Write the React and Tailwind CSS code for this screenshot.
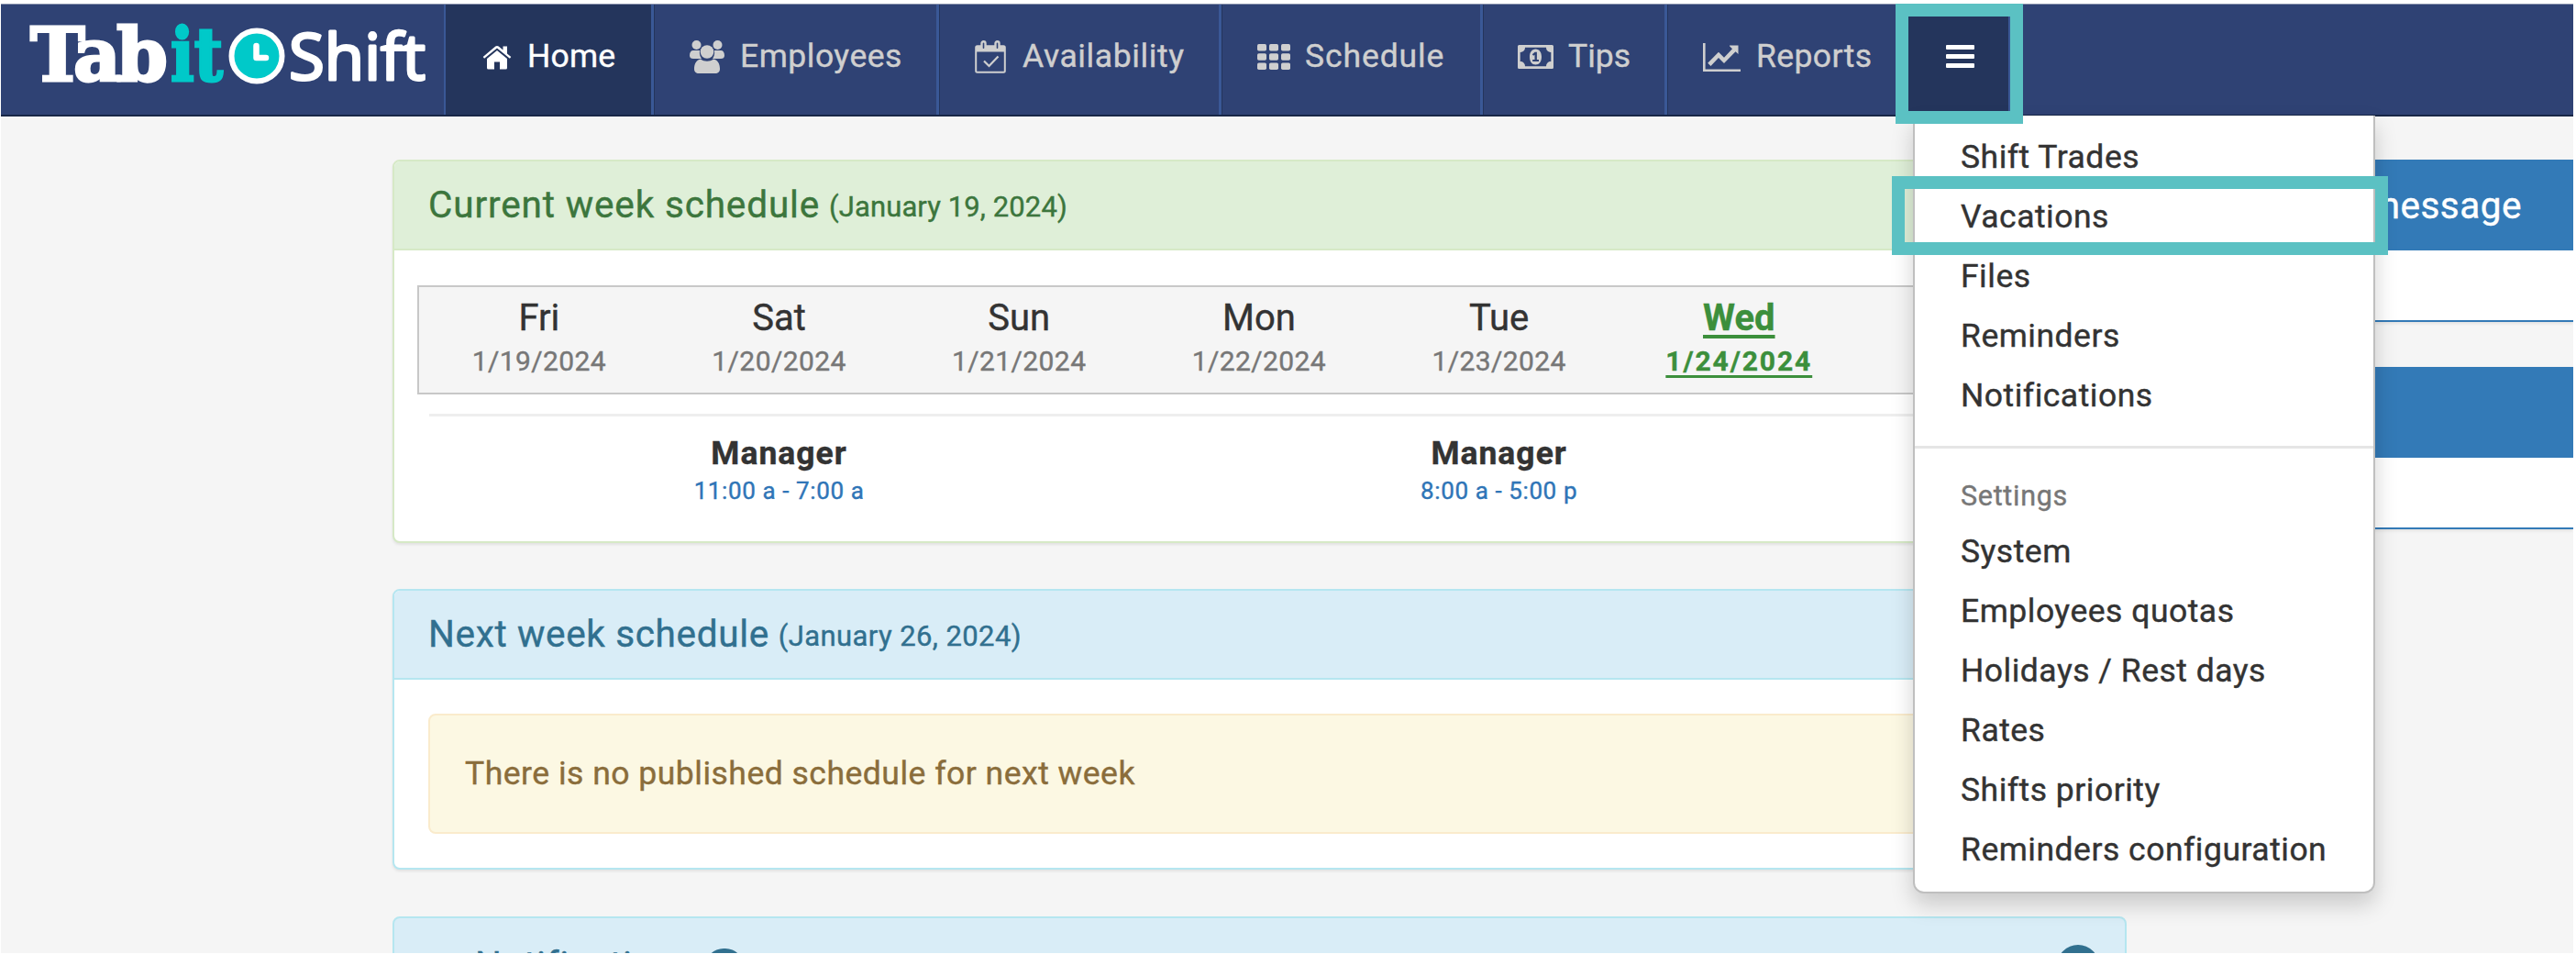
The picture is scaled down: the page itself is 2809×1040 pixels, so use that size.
import React from 'react';

const HomeIcon = () => (
  <svg viewBox="0 0 32 27" className="h-[27px] w-8" fill="currentColor">
    <path d="M16 6 L5 15 V25 a1.500 1.500 0 0 0 1.500 1.500 H13 V18.500 H19 V26.500 H25.500 A1.500 1.500 0 0 0 27 25 V15 Z" />
    <path d="M31.300 13 L27 9.400 V1.500 H22.500 V5.500 L17.700 1.500 C16.700 0.700 15.300 0.700 14.300 1.500 L0.700 13 L2.100 14.800 L16 3.500 L29.900 14.800 Z" />
  </svg>
);

const UsersIcon = () => (
  <svg viewBox="0 0 38 36" className="h-9 w-[38px]" fill="currentColor">
    <circle cx="7.500" cy="5" r="5" />
    <circle cx="30.500" cy="5" r="5" />
    <path d="M4 11 H11 C10.500 15 11.500 18 13 20 H4 C1.500 20 0 19 0 16.500 C0 13 1.500 11 4 11Z" />
    <path d="M34 11 H27 C27.500 15 26.500 18 25 20 H34 C36.500 20 38 19 38 16.500 C38 13 36.500 11 34 11Z" />
    <circle cx="19" cy="12.500" r="7.300" />
    <path d="M12 20.500 C16 23.500 22 23.500 26 20.500 C31 21.500 33 26 33 31 C33 34.500 31 36 28 36 H10 C7 36 5 34.500 5 31 C5 26 7 21.500 12 20.500Z" />
  </svg>
);

const CalendarIcon = () => (
  <svg viewBox="0 0 34 36" className="h-9 w-[34px]" fill="none" stroke="currentColor">
    <rect x="1.200" y="6.200" width="31.600" height="28.600" rx="1.500" strokeWidth="2" />
    <path d="M1 6 H33 V12.500 H1 Z" fill="currentColor" stroke="none" />
    <rect x="7.500" y="1.200" width="4" height="9" rx="2" fill="#2f4274" strokeWidth="2.400" />
    <rect x="22.500" y="1.200" width="4" height="9" rx="2" fill="#2f4274" strokeWidth="2.400" />
    <path d="M10 22.500 L15.500 28 L25.500 17.500" strokeWidth="2.200" />
  </svg>
);

const GridIcon = () => (
  <svg viewBox="0 0 36 28" className="h-7 w-9" fill="currentColor">
    {[0, 13, 26].map((x) =>
      [0, 10.25, 20.5].map((y) => <rect key={`${x}-${y}`} x={x} y={y} width="10" height="7.500" rx="1.700" />)
    )}
  </svg>
);

const MoneyIcon = () => (
  <svg viewBox="0 0 39 26" className="h-[26px] w-[39px]" fill="currentColor" fillRule="evenodd">
    <path d="M1.500 0 H37.500 A1.500 1.500 0 0 1 39 1.500 V24.500 A1.500 1.500 0 0 1 37.500 26 H1.500 A1.500 1.500 0 0 1 0 24.500 V1.500 A1.500 1.500 0 0 1 1.500 0Z M8 2.700 A5 5 0 0 1 2.700 8 V18 A5 5 0 0 1 8 23.300 H31 A5 5 0 0 1 36.300 18 V8 A5 5 0 0 1 31 2.700Z" />
    <path d="M19.500 4.500 C23.500 4.500 26 8 26 13 S23.500 21.500 19.500 21.500 S13 18 13 13 S15.500 4.500 19.500 4.500Z M18.700 7.700 L15.800 10.300 L17.200 11.700 L18.500 10.700 V16 H16.200 V18 H23 V16 H20.900 V7.700Z" />
  </svg>
);

const ChartIcon = () => (
  <svg viewBox="0 0 41 31" className="h-[31px] w-[41px]" fill="currentColor">
    <path d="M0 0 H2.600 V28.400 H41 V31 H0Z" />
    <path d="M38.500 2.500 V12 L35.500 9.300 L23 22 L17 16 L8.500 25 L5.200 21.800 L17 9.700 L23 15.700 L32 6.300 L29 3.300 C28.700 2.900 28.900 2.500 29.500 2.500Z" />
  </svg>
);

const Logo = () => (
  <svg viewBox="0 0 460 105" className="h-[105px] w-[460px] overflow-visible">
    <g fontFamily="DejaVu Serif" fontWeight="700" fontSize="80" strokeWidth="3">
      <text x="13 60 107" y="83" fill="#fff" stroke="#fff">Tab</text>
      <text x="166" y="83" fill="#00c9c9" stroke="#00c9c9" textLength="57" lengthAdjust="spacingAndGlyphs">it</text>
    </g>
    <circle cx="260" cy="56" r="27.500" fill="#00c9c9" stroke="#fff" strokeWidth="6" />
    <path d="M259.500 45 V58 H270" fill="none" stroke="#fff" strokeWidth="6.500" strokeLinecap="round" strokeLinejoin="round" />
    <text x="295" y="82" fill="#fff" stroke="#fff" strokeWidth="3" strokeLinejoin="round" fontFamily="Open Sans" fontSize="69" textLength="149" lengthAdjust="spacingAndGlyphs">Shift</text>
  </svg>
);

const navItems = [
  { label: 'Home', icon: <HomeIcon />, item: 'w-[227px] pl-[39px] gap-[17px] bg-[#24355c] text-white', text: 'tracking-[0.2px]' },
  { label: 'Employees', icon: <UsersIcon />, item: 'w-[311px] pl-[38px] gap-[17px]', text: 'tracking-[0.5px]' },
  { label: 'Availability', icon: <CalendarIcon />, item: 'w-[308px] pl-[38px] gap-[18px]', text: 'tracking-[0.6px]' },
  { label: 'Schedule', icon: <GridIcon />, item: 'w-[285px] pl-[38px] gap-[16px]', text: 'tracking-[0.9px]' },
  { label: 'Tips', icon: <MoneyIcon />, item: 'w-[201px] pl-[37px] gap-[16px]', text: '' },
  { label: 'Reports', icon: <ChartIcon />, item: 'w-[263px] pl-[38px] gap-[17px]', text: 'tracking-[0.4px]' },
];

const days = [
  { name: 'Fri', date: '1/19/2024' },
  { name: 'Sat', date: '1/20/2024', shift: '11:00 a - 7:00 a' },
  { name: 'Sun', date: '1/21/2024' },
  { name: 'Mon', date: '1/22/2024' },
  { name: 'Tue', date: '1/23/2024', shift: '8:00 a - 5:00 p' },
  { name: 'Wed', date: '1/24/2024', today: true },
  { name: 'Thu', date: '1/25/2024' },
];

const mainLinks = ['Shift Trades', 'Vacations', 'Files', 'Reminders', 'Notifications'];
const settingsLinks = ['System', 'Employees quotas', 'Holidays / Rest days', 'Rates', 'Shifts priority', 'Reminders configuration'];

const Navbar = () => (
  <nav className="flex h-[123px] shrink-0 border-t border-b-2 border-t-[#8790ab] border-b-[#182747] bg-[#2f4274] text-[#cfcfcf]">
    <div className="w-[485px] border-r-2 border-[#3a5896] pl-[19px]">
      <Logo />
    </div>
    {navItems.map(({ label, icon, item, text }) => (
      <div key={label} className={`flex items-center border-r-[3px] border-l border-r-[#3a5896] border-l-[#24355c] pb-[6px] ${item}`}>
        <span className="shrink-0">{icon}</span>
        <span className={`text-[35.5px] leading-none ${text}`}>{label}</span>
      </div>
    ))}
    <div className="flex w-[112px] items-center justify-center border-r-[3px] border-[#3a5896] bg-[#24355c] pb-[8px] pl-[4px]">
      <span className="flex flex-col gap-[5px]">
        <span className="h-[5px] w-[31px] rounded-[1px] bg-white" />
        <span className="h-[5px] w-[31px] rounded-[1px] bg-white" />
        <span className="h-[5px] w-[31px] rounded-[1px] bg-white" />
      </span>
    </div>
  </nav>
);

const CurrentWeek = () => (
  <section className="h-[418px] rounded-lg border-2 border-[#d6e9c6] bg-white shadow-[0_2px_3px_rgba(0,0,0,0.08)]">
    <h2 className="flex h-[97px] items-center rounded-t-md border-b-2 border-[#d6e9c6] bg-[#dfefd8] pl-[37px] text-[40.5px] text-[#3c763d]">
      <span className="tracking-[0.85px]">Current week schedule</span>
      <span className="ml-[10px] pt-[5px] text-[31px] tracking-[0.1px]">(January 19, 2024)</span>
    </h2>
    <div className="mt-[38px] ml-[25px] mr-[12px] flex h-[119px] border-2 border-[#c8c8c8] bg-[#f5f5f5]">
      {days.map(({ name, date, today }) => (
        <div
          key={name}
          className={`w-[261.7px] shrink-0 pt-[11px] text-center ${today ? 'font-bold text-[#3c8f3c] underline underline-offset-[5px]' : ''}`}
        >
          <div className="text-[40px] leading-[46px]">{name}</div>
          <div className={`mt-[3px] text-[30px] leading-[42px] ${today ? 'tracking-[1.9px]' : 'tracking-[0.4px] text-[#777]'}`}>{date}</div>
        </div>
      ))}
    </div>
    <hr className="mt-[21px] ml-[38px] mr-[38px] border-t-[3px] border-[#eee]" />
    <div className="ml-[27px] flex pt-[20px]">
      {days.map(({ name, shift }) => (
        <div key={name} className="w-[261.7px] shrink-0 text-center">
          {shift && (
            <>
              <div className="text-[35.5px] leading-[40px] font-bold tracking-[1px]">Manager</div>
              <div className="mt-[3px] text-[26px] leading-[36px] tracking-[0.6px] text-[#2f75b7]">{shift}</div>
            </>
          )}
        </div>
      ))}
    </div>
  </section>
);

const NextWeek = () => (
  <section className="mt-[50px] h-[306px] rounded-lg border-2 border-[#b5e6f0] bg-white shadow-[0_2px_3px_rgba(0,0,0,0.08)]">
    <h2 className="flex h-[97px] items-center rounded-t-md border-b-2 border-[#b5e6f0] bg-[#d9edf7] pl-[37px] text-[40.5px] text-[#31708f]">
      <span className="tracking-[0.65px]">Next week schedule</span>
      <span className="ml-[10px] pt-[5px] text-[31px] tracking-[0.4px]">(January 26, 2024)</span>
    </h2>
    <div className="mx-[37px] mt-[37px] flex h-[131px] items-center rounded-lg border-2 border-[#faebcc] bg-[#fcf8e3] pl-[38px] text-[35.5px] text-[#8a6d3b]">
      <span className="tracking-[0.5px]">There is no published schedule for next week</span>
    </div>
  </section>
);

const NotificationsPanel = () => (
  <section className="mt-[51px] h-[200px] rounded-lg border-2 border-[#b5e6f0] bg-[#d9edf7] pt-[27px] text-[#31708f]">
    <div className="flex items-start pl-[88px] pr-7">
      <span className="w-[251px] text-[40.5px] leading-[48px] tracking-[0.6px]">Notifications</span>
      <span className="mt-[6px] h-10 w-[42px] rounded-[20px] bg-[#31708f]" />
      <span className="mt-[2px] ml-auto size-[46px] rounded-full bg-[#31708f]" />
    </div>
  </section>
);

const SidePanel = ({ title }) => (
  <section className="h-[177px] border-2 border-r-0 border-[#337ab7] bg-white shadow-[0_2px_3px_rgba(0,0,0,0.08)]">
    <h2 className="flex h-[97px] items-center justify-end bg-[#337ab7] pr-[56px] pb-px text-[40.5px] tracking-[0.5px] text-white">{title}</h2>
  </section>
);

const MenuLink = ({ children }) => (
  <li className="h-[65px] pl-[50px] text-[35.5px] leading-[65px] tracking-[0.5px]">{children}</li>
);

const MoreMenu = () => (
  <ul className="absolute top-[126px] left-[2086px] h-[848px] w-[504px] rounded-b-xl border-2 border-t-0 border-[#bfbfbf] bg-white pt-[13px] shadow-[0_12px_24px_rgba(0,0,0,0.18)]">
    {mainLinks.map((label) => <MenuLink key={label}>{label}</MenuLink>)}
    <li className="mt-[22px] h-[3px] bg-[#e5e5e5]" />
    <li className="mt-[19px] h-[61px] pl-[50px] text-[30.5px] leading-[66px] tracking-[0.7px] text-[#777]">Settings</li>
    {settingsLinks.map((label) => <MenuLink key={label}>{label}</MenuLink>)}
  </ul>
);

const App = () => (
  <div className="relative h-[1040px] w-[2809px] overflow-hidden bg-white pt-1 pr-[3px] pl-px font-['Roboto',sans-serif] text-[#333] [-webkit-text-stroke:0.4px]">
    <div className="flex h-[1035px] flex-col overflow-hidden bg-[#f5f5f5]">
      <Navbar />
      <div className="flex gap-[32px] pt-[47px] pl-[427px]">
        <main className="w-[1891px] shrink-0">
          <CurrentWeek />
          <NextWeek />
          <NotificationsPanel />
        </main>
        <aside className="flex flex-1 flex-col gap-[49px]">
          <SidePanel title="message" />
          <SidePanel />
        </aside>
      </div>
    </div>
    <MoreMenu />
    {/* Highlight frames over the menu button and the Vacations link */}
    <div className="absolute top-1 left-[2067px] h-[131px] w-[139px] border-14 border-[#5bc1c3]" />
    <div className="absolute top-[192px] left-[2063px] h-[86px] w-[541px] border-14 border-[#5bc1c3]" />
  </div>
);

export default App;
